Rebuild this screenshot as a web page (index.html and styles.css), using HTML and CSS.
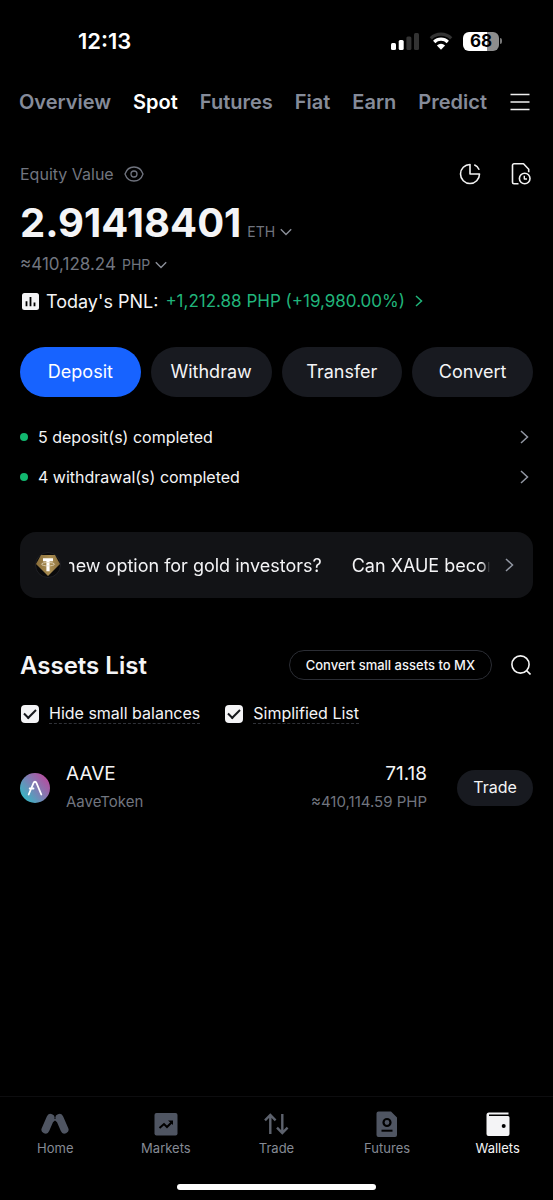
FILE: index.html
```html
<!DOCTYPE html>
<html lang="en">
<head>
<meta charset="utf-8">
<meta name="viewport" content="width=device-width, initial-scale=1">
<title>Wallets</title>
<link rel="stylesheet" href="styles.css">
</head>
<body>
<header class="status">
  <time class="status-time">12:13</time>
  <div class="status-icons">
    <svg class="signal" width="28" height="18" viewBox="0 0 28 18"><rect x="0" y="11" width="5" height="7" rx="1.5" fill="#fff"/><rect x="7.7" y="8" width="5" height="10" rx="1.5" fill="#fff"/><rect x="15.4" y="4.500" width="5" height="13.500" rx="1.500" fill="#333"/><rect x="23" y="1" width="5" height="17" rx="1.500" fill="#333"/></svg>
    <svg width="24" height="18" viewBox="0 0 24 18" fill="none"><path d="M1.800 6.300a14.600 14.600 0 0 1 20.400 0" stroke="#333" stroke-width="3.200"/><path d="M5.200 10a9.700 9.700 0 0 1 13.600 0" stroke="#fff" stroke-width="3.200"/><path d="M12 17.800L7.900 13.500a5.900 5.900 0 0 1 8.200 0Z" fill="#fff"/></svg>
    <div class="battery"><span class="battery-level">68</span><span class="battery-tip"></span></div>
  </div>
</header>

<nav class="tabs" aria-label="Accounts">
  <a href="#overview">Overview</a>
  <a href="#spot" class="active">Spot</a>
  <a href="#futures">Futures</a>
  <a href="#fiat">Fiat</a>
  <a href="#earn">Earn</a>
  <a href="#predict">Predict</a>
  <button class="icon-button menu" aria-label="Menu"><svg width="20" height="18" viewBox="0 0 20 18"><path d="M.5 1.500h19M.5 9h19M.5 16.500h19" stroke="#eee" stroke-width="1.500"/></svg></button>
</nav>

<main class="content">
  <section class="equity">
    <div class="equity-head">
      <span class="muted equity-label">Equity Value</span>
      <button class="icon-button" aria-label="Hide values"><svg width="20" height="16" viewBox="0 0 20 16" fill="none" stroke="#70747f" stroke-width="1.300"><path d="M1 8C2.500 3.500 6 1 10 1s7.500 2.500 9 7c-1.500 4.500-5 7-9 7s-7.500-2.500-9-7Z"/><circle cx="10" cy="8" r="3"/></svg></button>
      <div class="equity-tools">
        <button class="icon-button" aria-label="Distribution"><svg width="22" height="22" viewBox="0 0 22 22" fill="none" stroke="#f2f2f2" stroke-width="1.600" stroke-linejoin="round"><path d="M11 1.500A9.500 9.500 0 1 0 20.500 11H11Z"/><path d="M15.300 1.800a9.600 9.600 0 0 1 4.900 4.900"/></svg></button>
        <button class="icon-button" aria-label="History"><svg width="20" height="22" viewBox="0 0 20 22" fill="none" stroke="#f2f2f2" stroke-width="1.600" stroke-linejoin="round"><path d="M7.500 20.700H3A1.500 1.500 0 0 1 1.500 19.200V2.300A1.500 1.500 0 0 1 3 .8h9.500l5.200 5.400v3"/><circle cx="13.700" cy="15.500" r="5.300"/><path d="M13.300 12.800v3.200h2.700" stroke-width="1.400"/></svg></button>
      </div>
    </div>
    <div class="equity-total">
      <strong>2.91418401</strong>
      <button class="unit unit-large">ETH <svg width="12" height="8" viewBox="0 0 12 8"><path d="M.8 1.200L6 6.500l5.200-5.300"/></svg></button>
    </div>
    <div class="equity-fiat muted">
      <span>≈410,128.24</span>
      <button class="unit">PHP <svg width="12" height="8" viewBox="0 0 12 8"><path d="M.8 1.200L6 6.500l5.200-5.300"/></svg></button>
    </div>
    <a class="pnl" href="#pnl">
      <svg width="17" height="17" viewBox="0 0 17 17"><rect width="17" height="17" rx="2.500" fill="#f4f4f6"/><path d="M4.500 8.200v5M8.500 4v9.200M12.500 9.500v3.700" stroke="#000" stroke-width="1.800"/></svg>
      <span>Today's PNL:</span>
      <span class="gain">+1,212.88 PHP (+19,980.00%)</span>
      <svg class="gain-arrow" width="8" height="12" viewBox="0 0 8 12"><path d="M1 1l5.500 5L1 11"/></svg>
    </a>
  </section>

  <div class="actions">
    <button class="action primary">Deposit</button>
    <button class="action">Withdraw</button>
    <button class="action">Transfer</button>
    <button class="action">Convert</button>
  </div>

  <div class="notices">
    <a href="#deposits" class="notice"><span>5 deposit(s) completed</span><svg class="chevron" width="9" height="14" viewBox="0 0 9 14"><path d="M1 1l6.500 6L1 13"/></svg></a>
    <a href="#withdrawals" class="notice"><span>4 withdrawal(s) completed</span><svg class="chevron" width="9" height="14" viewBox="0 0 9 14"><path d="M1 1l6.500 6L1 13"/></svg></a>
  </div>

  <a href="#news" class="banner">
    <svg class="gold" width="26" height="26" viewBox="0 0 26 26"><defs><linearGradient id="gold" x1="0" x2="1"><stop stop-color="#8a6e3b"/><stop offset=".6" stop-color="#a98d51"/><stop offset="1" stop-color="#8b703e"/></linearGradient></defs><circle cx="13" cy="13" r="12.500" fill="#0a0a0b" stroke="#202126"/><path d="M6 3h14l5 9-12 12L1 12Z" fill="url(#gold)"/><path d="M8 6.200h10v3h-3.400v10h-3.200v-10H8Z" fill="#fff"/><ellipse cx="13" cy="12.200" rx="6.500" ry="1.700" fill="none" stroke="#e6dcc5" stroke-width=".8"/></svg>
    <span class="ticker"><span class="ticker-track"><span>new option for gold investors?</span><span>Can XAUE become</span></span></span>
    <svg class="chevron" width="9" height="14" viewBox="0 0 9 14"><path d="M1 1l6.500 6L1 13"/></svg>
  </a>

  <section class="assets">
    <div class="assets-head">
      <h2>Assets List</h2>
      <button class="convert-small">Convert small assets to MX</button>
      <button class="icon-button" aria-label="Search"><svg width="20" height="20" viewBox="0 0 20 20" fill="none" stroke="#f5f5f5" stroke-width="1.600"><circle cx="9.500" cy="9.500" r="8.600"/><path d="M15.500 15.500l4 4"/></svg></button>
    </div>
    <div class="filters">
      <label><input type="checkbox" checked><span>Hide small balances</span></label>
      <label><input type="checkbox" checked><span>Simplified List</span></label>
    </div>
    <div class="asset">
      <svg width="30" height="30" viewBox="0 0 30 30" fill="none"><defs><linearGradient id="aave" x1=".1" y1=".85" x2=".9" y2=".2"><stop stop-color="#36b8c4"/><stop offset=".5" stop-color="#7a82b5"/><stop offset="1" stop-color="#b350a0"/></linearGradient></defs><circle cx="15" cy="15" r="15" fill="url(#aave)"/><path d="M8.700 21.500L13.500 10c.7-1.700 2.300-1.700 3 0l4.800 11.500M9.700 15.500h3.800" stroke="#fff" stroke-width="1.800" stroke-linecap="round"/></svg>
      <div class="asset-name"><span>AAVE</span><small>AaveToken</small></div>
      <div class="asset-balance"><span>71.18</span><small>≈410,114.59 PHP</small></div>
      <button class="trade">Trade</button>
    </div>
  </section>
</main>

<nav class="bottom" aria-label="Main">
  <a href="#home"><svg width="28" height="24" viewBox="0 0 28 24"><path d="M9.500 6L4.500 17.500M18.500 6l5 11.500" stroke="#4f5562" stroke-width="8" stroke-linecap="round"/><path d="M12 7h4v3l-2-1.500L12 10Z" fill="#4f5562"/></svg>Home</a>
  <a href="#markets"><svg width="24" height="24" viewBox="0 0 24 24"><rect x=".5" y="1" width="23" height="22.500" rx="2" fill="#4f5562"/><path d="M5.500 16l4.500-4 3 3 5-5" fill="none" stroke="#000" stroke-width="2"/><path d="M14 8.500h5V13Z" fill="#000"/></svg>Markets</a>
  <a href="#trade"><svg width="28" height="24" viewBox="0 0 28 24" fill="none" stroke="#5d626d" stroke-width="2.400"><path d="M8.300 22V3M3 8.300L8.300 3l5.300 5.300M20.300 2v19M15 15.700l5.300 5.300 5.300-5.300"/></svg>Trade</a>
  <a href="#futures-market"><svg width="22" height="26" viewBox="0 0 22 26"><path d="M2.500.5H15L21 6.500V24a2 2 0 0 1-2 2H2.500a2 2 0 0 1-2-2V2.500a2 2 0 0 1 2-2Z" fill="#4f5562"/><circle cx="11" cy="11.500" r="3.500" fill="none" stroke="#000" stroke-width="2.200"/><path d="M5.500 19.700h11" stroke="#000" stroke-width="2"/></svg>Futures</a>
  <a href="#wallets" class="current"><svg width="24" height="24" viewBox="0 0 24 24"><path d="M3 .5h19.500v2H3V4h19a1.500 1.500 0 0 1 1.500 1.500V22a2 2 0 0 1-2 2h-19a2 2 0 0 1-2-2V3A2.500 2.500 0 0 1 3 .5Z" fill="#f4f4f6"/><circle cx="17.700" cy="14" r="2" fill="#000"/></svg>Wallets</a>
</nav>
<div class="home-indicator"></div>
</body>
</html>
```
FILE: styles.css
```css
* { box-sizing: border-box; }

body {
  margin: 0;
  min-height: 100vh;
  display: flex;
  flex-direction: column;
  background: #000;
  color: #f4f4f6;
  font-family: Inter, "Liberation Sans", sans-serif;
}

a { color: inherit; text-decoration: none; }
button { font: inherit; color: inherit; border: 0; background: none; padding: 0; white-space: nowrap; }
svg { display: block; flex: none; }
.muted { color: #71757f; }
.icon-button { display: flex; flex: none; }

.status {
  height: 82px;
  padding: 0 51px 0 78px;
  display: flex;
  align-items: center;
  justify-content: space-between;
}
.status-time { font-size: 22px; font-weight: 600; color: #fff; }
.status-icons { display: flex; align-items: center; gap: 10px; }
.battery { display: flex; align-items: center; gap: 1px; }
.battery-level {
  width: 36px;
  border-radius: 6px;
  background: linear-gradient(90deg, #fff 68%, #8d8d8d 68%);
  color: #000;
  font-size: 17px;
  font-weight: 700;
  line-height: 19px;
  text-align: center;
}
.battery-tip { width: 2px; height: 6px; border-radius: 0 2px 2px 0; background: #777; }

.tabs {
  height: 40px;
  padding: 0 23px 0 19px;
  display: flex;
  align-items: center;
  gap: 22px;
  font-size: 20px;
  font-weight: 600;
  color: #858b99;
}
.tabs .active { color: #fff; }
.menu { margin-left: auto; }

.content { flex: 1; padding: 40px 20px 0; }

.equity-head { display: flex; align-items: center; height: 24px; gap: 10px; }
.equity-label { font-size: 16px; }
.equity-tools { display: flex; gap: 30px; margin-left: auto; padding-right: 2px; }
.equity-total { display: flex; align-items: baseline; gap: 6px; margin-top: 13px; line-height: 48px; }
.equity-total strong { font-size: 40px; font-weight: 700; }
.unit { display: inline-flex; align-items: center; gap: 5px; font-size: 14px; color: #71757f; }
.unit svg { fill: none; stroke: #8b8f99; stroke-width: 1.4; }
.unit-large { line-height: 20px; }
.equity-fiat { display: flex; align-items: baseline; gap: 6px; margin-top: 7px; font-size: 17px; line-height: 20px; }
.pnl { display: flex; align-items: center; gap: 7px; height: 24px; margin-top: 14px; padding-left: 2px; font-size: 18px; white-space: nowrap; }
.gain { font-size: 17px; color: #20b57b; }
.gain-arrow { margin-left: 3px; fill: none; stroke: #20b57b; stroke-width: 1.5; }

.actions { display: grid; grid-template-columns: repeat(4, 1fr); gap: 10px; margin-top: 34px; }
.action { height: 50px; padding-bottom: 2px; border-radius: 25px; background: #181a20; font-size: 18px; }
.action.primary { background: #1763ff; color: #fff; }

.notices { margin-top: 20px; }
.notice { display: flex; align-items: center; height: 40px; padding-right: 4px; gap: 10px; font-size: 16px; }
.notice::before { content: ""; width: 8px; height: 8px; border-radius: 50%; background: #12b76f; }
.chevron { margin-left: auto; fill: none; stroke: #9297a3; stroke-width: 1.5; }

.banner { display: flex; align-items: center; height: 66px; margin-top: 35px; padding: 0 19px 0 15px; border-radius: 16px; background: #121316; font-size: 18px; }
.ticker { flex: 1; min-width: 0; margin: 0 15px 0 8px; overflow: hidden; white-space: nowrap; mask-image: linear-gradient(90deg, #000 98%, transparent); }
.ticker-track { display: flex; gap: 30px; margin-left: -4px; }

.assets-head { display: flex; align-items: center; gap: 19px; height: 30px; margin-top: 52px; padding-right: 2px; }
.assets-head h2 { margin: 0 auto 0 0; font-size: 24px; font-weight: 600; }
.convert-small { height: 30px; padding: 0 16px; border: 1px solid #2b2d34; border-radius: 15px; font-size: 13px; font-weight: 500; }

.filters { display: flex; gap: 25px; height: 24px; margin-top: 22px; padding-left: 1px; }
.filters label { display: flex; align-items: center; gap: 10px; font-size: 16px; }
.filters span { line-height: 19px; border-bottom: 1px dashed #303238; }
.filters input { appearance: none; display: grid; place-items: center; width: 18px; height: 18px; margin: 0; border-radius: 4px; background: #f4f4f6; }
.filters input:checked::before { content: ""; width: 10px; height: 5px; margin-bottom: 3px; border: solid #15171c; border-width: 0 0 2px 2px; transform: rotate(-45deg); }

.asset { display: flex; align-items: center; margin-top: 34px; line-height: 28px; }
.asset-name, .asset-balance { display: flex; flex-direction: column; font-size: 19px; }
.asset-name { margin-left: 16px; }
.asset-balance { margin-left: auto; margin-right: 30px; text-align: right; }
.asset small { font-size: 15px; color: #71757f; }
.trade { width: 76px; height: 36px; padding-bottom: 2px; border-radius: 18px; background: #181a20; font-size: 16px; }

.bottom { display: grid; grid-template-columns: repeat(5, 1fr); padding-top: 14px; border-top: 1px solid #0d0d0f; }
.bottom a { display: grid; grid-template-rows: 26px 22px; place-items: center; font-size: 13px; color: #858a94; }
.bottom .current { color: #f4f4f6; }
.home-indicator { width: 36%; height: 6px; margin: 25px auto 10px; border-radius: 3px; background: #fff; }
```
